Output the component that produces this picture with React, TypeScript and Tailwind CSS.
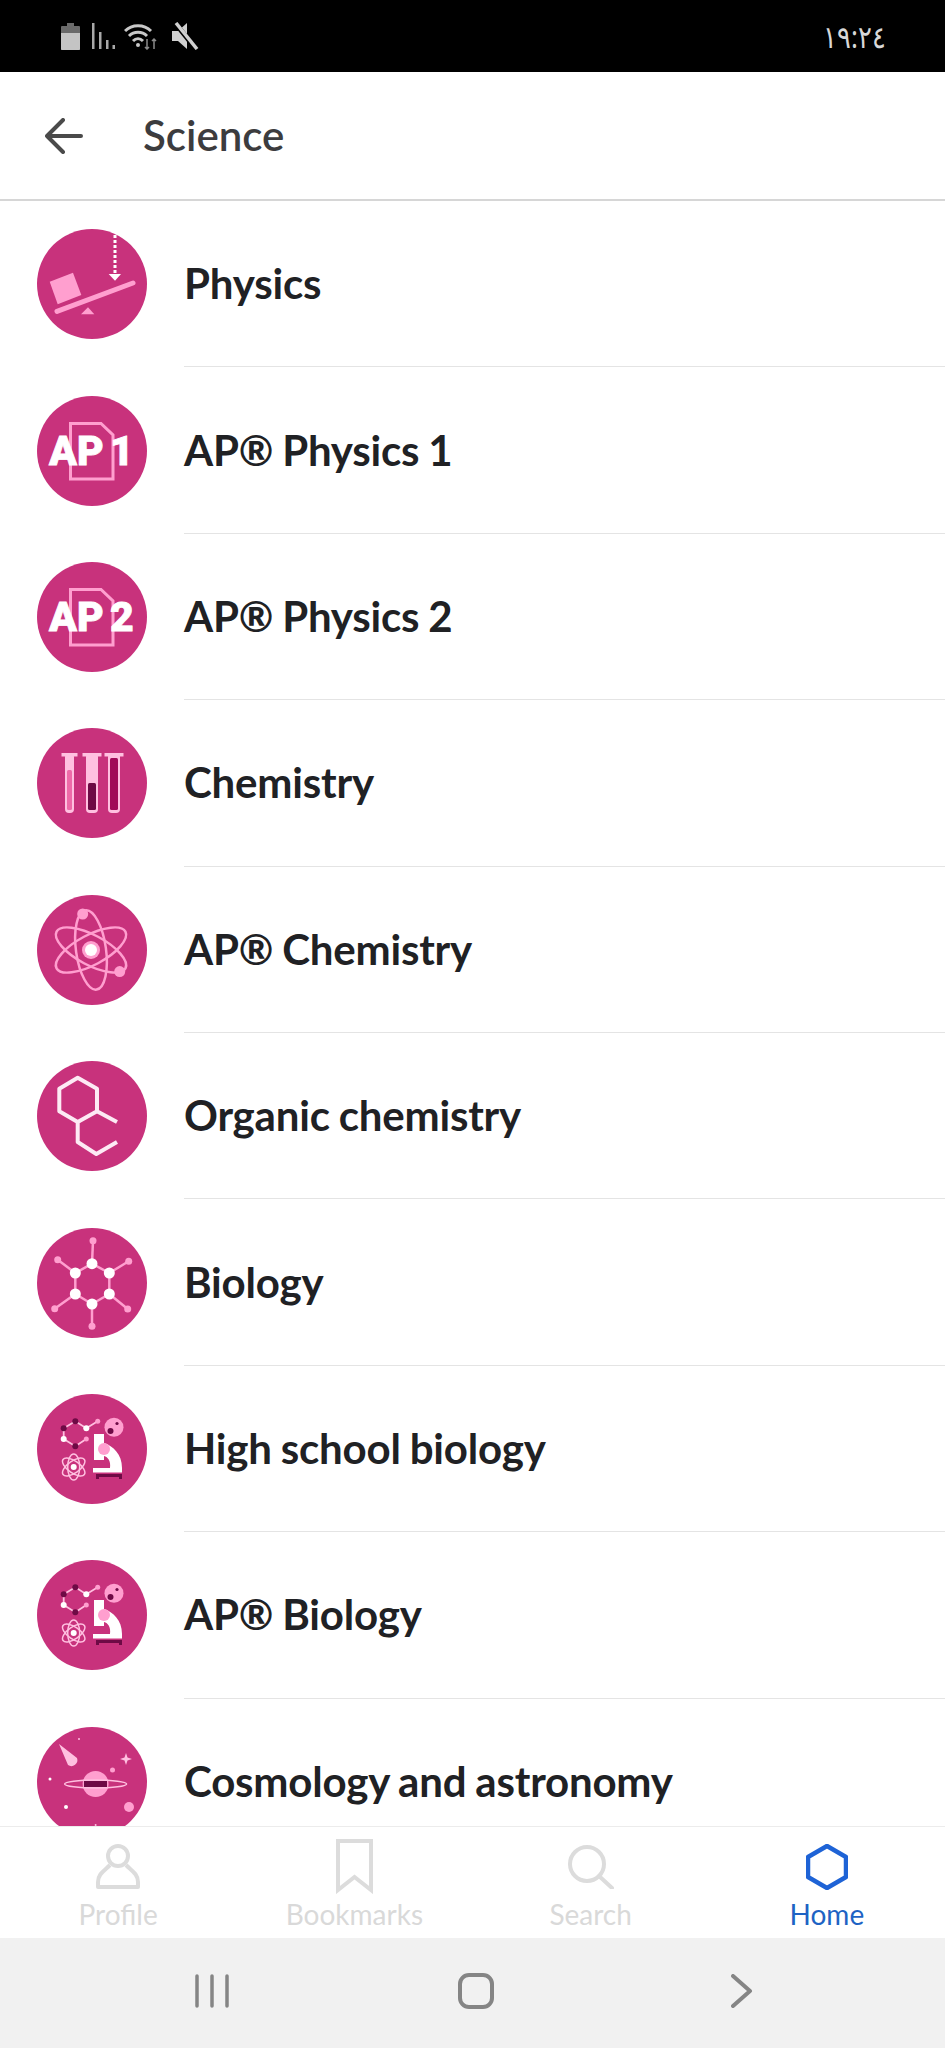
import type { ReactNode } from "react";

const PINK = "#ff9fcf";
const LIGHT = "#ffc0e0";
const DARK = "#6e0a45";

function Physics() {
  return (
    <>
      <polygon points="12.7,52.7 36,43.7 44.3,66 20.7,75.3" fill={PINK} />
      <line x1="20" y1="82.4" x2="96" y2="54" stroke={PINK} strokeWidth="5" strokeLinecap="round" />
      <polygon points="44,85.3 51,78.3 57.3,85.3" fill={PINK} />
      <line x1="78" y1="6" x2="78" y2="44" stroke="#fff" strokeWidth="3" strokeDasharray="3 2" />
      <polygon points="71.7,45 84,45 78,51.7" fill="#fff" />
    </>
  );
}

function ApIcon({ n }: { n: string }) {
  return (
    <>
      <path d="M33.5 27.5H64L76 39V83H33.5Z" fill="none" stroke={PINK} strokeWidth="3" />
      <text x="12" y="69" fontFamily="Roboto, sans-serif" fontWeight="900" fontSize="41" fill="#fff" stroke="#fff" strokeWidth="0.8">
        AP
      </text>
      <text x="73" y="69" fontFamily="Roboto, sans-serif" fontWeight="900" fontSize="41" fill="#fff" stroke="#fff" strokeWidth="0.8">
        {n}
      </text>
    </>
  );
}

function Tube({ x, w, fill, fluidTop }: { x: number; w: number; fill: string; fluidTop: number }) {
  return (
    <>
      <rect x={x} y="25" width={w} height="60" rx="4" fill={LIGHT} />
      <rect x={x - 3.5} y="25" width={w + 7} height="3.5" fill={LIGHT} />
      <rect x={x + 2} y={fluidTop} width={w - 4} height={82 - fluidTop} rx="1.5" fill={fill} />
    </>
  );
}

function Chemistry() {
  return (
    <>
      <Tube x={28} w={9} fill="#ee6aa8" fluidTop={42} />
      <Tube x={49} w={12} fill={DARK} fluidTop={55} />
      <Tube x={71} w={12} fill="#a10a58" fluidTop={30} />
    </>
  );
}

function ApChemistry() {
  return (
    <>
      <g fill="none" stroke={PINK} strokeWidth="2.5">
        <ellipse cx="54" cy="55" rx="39" ry="15" transform="rotate(28 54 55)" />
        <ellipse cx="54" cy="55" rx="39" ry="15" transform="rotate(-28 54 55)" />
        <ellipse cx="54" cy="55" rx="40" ry="15" transform="rotate(82 54 55)" />
      </g>
      <circle cx="54" cy="55" r="9" fill={PINK} />
      <circle cx="54" cy="55" r="6" fill="#fff" />
      <circle cx="45.7" cy="19" r="5.5" fill={PINK} />
      <circle cx="82.7" cy="76.6" r="5.5" fill={PINK} />
    </>
  );
}

function Organic() {
  return (
    <path
      d="M40.7 16.7L60 27.7V50.3L40.7 61L22.3 50.3V27.7ZM60 50.3L80 61M40.7 61V81L59.3 93L80 81"
      fill="none"
      stroke="#fdeaf4"
      strokeWidth="4"
      strokeLinejoin="round"
    />
  );
}

function Biology() {
  const inner = [[55, 35.7], [72.3, 45], [72.3, 66], [55, 76], [38.3, 66], [38.3, 45]];
  const outer = [[56, 12.7], [91.7, 33.3], [90.7, 81], [55, 98.3], [17.7, 80.7], [20.7, 31.7]];
  return (
    <>
      <g stroke={PINK} strokeWidth="2.5">
        {inner.map(([x, y], i) => {
          const next = inner[(i + 1) % 6];
          return <line key={i} x1={x} y1={y} x2={next[0]} y2={next[1]} />;
        })}
        {inner.map(([x, y], i) => (
          <line key={i} x1={x} y1={y} x2={outer[i][0]} y2={outer[i][1]} />
        ))}
      </g>
      {outer.map(([x, y], i) => (
        <circle key={i} cx={x} cy={y} r="3.5" fill={PINK} />
      ))}
      {inner.map(([x, y], i) => (
        <circle key={i} cx={x} cy={y} r="5.5" fill="#fff" />
      ))}
    </>
  );
}

function LifeSciences() {
  return (
    <>
      <path d="M26.7 34.3L38.3 27.3L49.3 34.3L60.7 27.3M26.7 34.3V45L38.3 52.3L49.3 45" fill="none" stroke={LIGHT} strokeWidth="1.8" />
      <circle cx="38.3" cy="27.3" r="3" fill={DARK} />
      <circle cx="49.3" cy="34.3" r="3" fill="#fff" />
      <circle cx="60.7" cy="27.3" r="2.5" fill={PINK} />
      <circle cx="26.7" cy="34.3" r="3" fill={DARK} />
      <circle cx="26.7" cy="45" r="3" fill="#fff" />
      <circle cx="38.3" cy="52.3" r="3" fill={DARK} />
      <circle cx="49.3" cy="45" r="2.5" fill={PINK} />
      <circle cx="77" cy="33.3" r="9.5" fill={PINK} />
      <circle cx="73.5" cy="37" r="3" fill={DARK} />
      <circle cx="80" cy="29.5" r="1.6" fill={DARK} />
      <g fill="none" stroke={LIGHT} strokeWidth="1.5">
        <ellipse cx="36.7" cy="73" rx="13" ry="6" transform="rotate(35 36.7 73)" />
        <ellipse cx="36.7" cy="73" rx="13" ry="6" transform="rotate(-35 36.7 73)" />
        <ellipse cx="36.7" cy="73" rx="13" ry="6" transform="rotate(90 36.7 73)" />
      </g>
      <circle cx="36.7" cy="73" r="3" fill="#fff" />
      <path d="M57 40H67V49C76 52 85 60 85 74H73C74 67 71 63 67 62V66H57Z" fill="#fff" />
      <rect x="56" y="74" width="29" height="4.5" fill="#fff" />
      <path d="M59 80H85V85H82V83H62V85H59Z" fill={DARK} />
      <circle cx="67" cy="55" r="6" fill={PINK} />
    </>
  );
}

function Cosmology() {
  return (
    <>
      <path d="M22 17L40 31A6 6 0 0 1 31 38Z" fill={LIGHT} />
      <path d="M89 26L90.5 30.5L95 32L90.5 33.5L89 38L87.5 33.5L83 32L87.5 30.5Z" fill={LIGHT} />
      <circle cx="58.6" cy="57" r="13" fill={PINK} />
      <rect x="47" y="54" width="23" height="6" fill={DARK} />
      <ellipse cx="58.6" cy="57" rx="31" ry="4" fill="none" stroke={LIGHT} strokeWidth="1.5" />
      <circle cx="92" cy="80" r="5" fill={PINK} />
      <circle cx="29" cy="80" r="2" fill="#fff" />
      <circle cx="13" cy="52" r="1.5" fill="#fff" />
      <circle cx="75.5" cy="43" r="2.5" fill={PINK} />
      <circle cx="42" cy="12" r="1" fill={LIGHT} />
      <circle cx="58.6" cy="98" r="1" fill={LIGHT} />
    </>
  );
}

const subjects: { title: string; icon: ReactNode }[] = [
  { title: "Physics", icon: <Physics /> },
  { title: "AP® Physics 1", icon: <ApIcon n="1" /> },
  { title: "AP® Physics 2", icon: <ApIcon n="2" /> },
  { title: "Chemistry", icon: <Chemistry /> },
  { title: "AP® Chemistry", icon: <ApChemistry /> },
  { title: "Organic chemistry", icon: <Organic /> },
  { title: "Biology", icon: <Biology /> },
  { title: "High school biology", icon: <LifeSciences /> },
  { title: "AP® Biology", icon: <LifeSciences /> },
  { title: "Cosmology and astronomy", icon: <Cosmology /> },
];

function SubjectRow({ title, icon }: { title: string; icon: ReactNode }) {
  return (
    <div className="flex h-[166.4px] shrink-0 items-center pl-[37px]">
      <svg viewBox="0 0 110 110" className="h-[110px] w-[110px] shrink-0">
        <circle cx="55" cy="55" r="55" fill="#c8327c" />
        {icon}
      </svg>
      <div className="ml-[37px] flex h-full flex-1 items-center border-b border-[#e4e4e4] text-[42px] font-bold tracking-[-0.2px] text-[#202124] [word-spacing:-1px]">
        {title}
      </div>
    </div>
  );
}

function StatusBar() {
  return (
    <div className="flex h-[72px] shrink-0 items-center justify-between bg-black pl-[61px] pr-[59px]">
      <div className="flex items-center">
        <svg viewBox="0 0 19 27" className="h-[27px] w-[19px]">
          <path d="M6 0H13V3H18A1 1 0 0 1 19 4V26A1 1 0 0 1 18 27H1A1 1 0 0 1 0 26V4A1 1 0 0 1 1 3H6Z" fill="#6a6a6a" />
          <path d="M0 10H19V26A1 1 0 0 1 18 27H1A1 1 0 0 1 0 26Z" fill="#c4c4c4" />
        </svg>
        <svg viewBox="0 0 23 26" className="ml-[12px] h-[26px] w-[23px]" fill="#a8a8a8">
          <rect x="0" y="0" width="2.5" height="26" />
          <rect x="7" y="9" width="2.5" height="17" />
          <rect x="14" y="17" width="2.5" height="9" />
          <rect x="20.5" y="22" width="2.5" height="4" />
        </svg>
        <svg viewBox="0 0 34 27" className="ml-[9px] h-[27px] w-[34px]" fill="none">
          <path d="M1 8C8 1 20 1 27 8M5 13C10 8 18 8 23 13M9 18C12 15 16 15 19 18" stroke="#c8c8c8" strokeWidth="3" />
          <circle cx="14" cy="22" r="2" fill="#c8c8c8" />
          <path d="M23 16V26M21 24L23 26L25 24M30 26V16M28 18L30 16L32 18" stroke="#8a8a8a" strokeWidth="1.5" />
        </svg>
        <svg viewBox="0 0 27 28" className="ml-[14px] h-[28px] w-[27px]">
          <path d="M0 9H6L15 1V27L6 19H0Z" fill="#d0d0d0" />
          <line x1="3" y1="1" x2="24" y2="27" stroke="#000" strokeWidth="5" />
          <line x1="4" y1="1" x2="25" y2="27" stroke="#d0d0d0" strokeWidth="3.5" />
        </svg>
      </div>
      <span className="inline-block scale-y-[1.2] font-['Noto_Sans',sans-serif] text-[26px] leading-none text-[#d8d8d8]">١٩:٢٤</span>
    </div>
  );
}

function Header() {
  return (
    <div className="flex h-[129px] shrink-0 items-center border-b-2 border-[#d6d6d6] bg-white pl-[45px]">
      <svg viewBox="0 0 38 36" className="h-[36px] w-[38px]" fill="none" stroke="#4a4a4a" strokeWidth="4" strokeLinecap="round" strokeLinejoin="round">
        <path d="M18 2L2 18L18 34M2 18H36" />
      </svg>
      <span className="ml-[60px] text-[42px] font-semibold text-[#3c3c3e]">Science</span>
    </div>
  );
}

const tabs = [
  {
    label: "Profile",
    active: false,
    icon: (
      <svg viewBox="0 0 44 45" className="h-[45px] w-[44px]" fill="none" stroke="#dcdcdc" strokeWidth="4" strokeLinejoin="round">
        <circle cx="22" cy="12" r="10" />
        <path d="M14 21C8 27 2 30 2 38V43H42V38C42 30 36 27 30 21" />
      </svg>
    ),
  },
  {
    label: "Bookmarks",
    active: false,
    icon: (
      <svg viewBox="0 0 37 55" className="h-[55px] w-[37px]" fill="none" stroke="#dcdcdc" strokeWidth="4">
        <path d="M2 2H35V51L18.5 38L2 51Z" />
      </svg>
    ),
  },
  {
    label: "Search",
    active: false,
    icon: (
      <svg viewBox="0 0 46 44" className="h-[44px] w-[46px]" fill="none" stroke="#dcdcdc" strokeWidth="4" strokeLinecap="round">
        <circle cx="19" cy="19" r="17" />
        <path d="M31 31L44 43" />
      </svg>
    ),
  },
  {
    label: "Home",
    active: true,
    icon: (
      <svg viewBox="0 0 42 46" className="h-[46px] w-[42px]" fill="none" stroke="#1e63d6" strokeWidth="4.5" strokeLinejoin="round">
        <path d="M21 2L40 13V33L21 44L2 33V13Z" />
      </svg>
    ),
  },
];

function TabBar() {
  return (
    <div className="grid h-[112px] shrink-0 grid-cols-4 border-t border-[#ececec] bg-white">
      {tabs.map((t) => (
        <div key={t.label} className="flex flex-col items-center">
          <div className="flex h-[71px] items-center pt-[8px]">{t.icon}</div>
          <span className={`text-[28px] leading-[32px] ${t.active ? "text-[#1e63c4]" : "text-[#d9d9d9]"}`}>{t.label}</span>
        </div>
      ))}
    </div>
  );
}

function NavBar() {
  return (
    <div className="flex h-[110px] shrink-0 items-center bg-[#f1f1f1] pb-[4px] pl-[195px]">
      <svg viewBox="0 0 34 34" className="h-[34px] w-[34px]" fill="none" stroke="#858585" strokeWidth="3.5" strokeLinecap="round">
        <path d="M2 2V32M17 2V32M32 2V32" />
      </svg>
      <svg viewBox="0 0 36 36" className="ml-[229px] h-[36px] w-[36px]" fill="none" stroke="#858585" strokeWidth="4">
        <rect x="2" y="2" width="32" height="32" rx="9" />
      </svg>
      <svg viewBox="0 0 22 34" className="ml-[237px] h-[34px] w-[22px]" fill="none" stroke="#858585" strokeWidth="4" strokeLinecap="round" strokeLinejoin="round">
        <path d="M2 2L19 17L2 32" />
      </svg>
    </div>
  );
}

export default function App() {
  return (
    <div className="flex h-[2048px] w-[945px] flex-col overflow-hidden bg-white font-['Lato',sans-serif]">
      <StatusBar />
      <Header />
      <div className="flex flex-1 flex-col overflow-hidden">
        {subjects.map((s) => (
          <SubjectRow key={s.title} title={s.title} icon={s.icon} />
        ))}
      </div>
      <TabBar />
      <NavBar />
    </div>
  );
}
